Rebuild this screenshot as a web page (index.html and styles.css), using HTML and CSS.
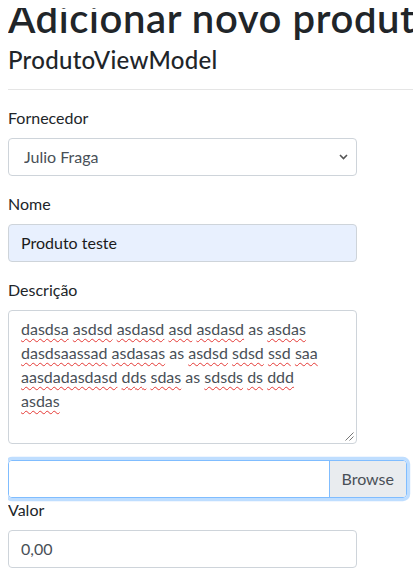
FILE: index.html
```html
<!DOCTYPE html>
<html lang="pt-BR">
<head>
<meta charset="utf-8">
<title>Adicionar novo produto</title>
<link rel="stylesheet" href="styles.css">
</head>
<body>
<main class="page">
  <h1 class="title">Adicionar novo produto</h1>
  <h4 class="subtitle">ProdutoViewModel</h4>
  <hr class="divider">
  <form class="form">
    <div class="group">
      <label class="label" for="forn">Fornecedor</label>
      <select class="control select" id="forn"><option>Julio Fraga</option></select>
    </div>
    <div class="group">
      <label class="label" for="nome">Nome</label>
      <input class="control autofill" id="nome" type="text" value="Produto teste">
    </div>
    <div class="group">
      <label class="label">Descrição</label>
      <div class="control textarea" role="textbox" aria-multiline="true"><span class="sp">dasdsa</span> <span class="sp">asdsd</span> <span class="sp">asdasd</span> <span class="sp">asd</span> <span class="sp">asdasd</span> as <span class="sp">asdas</span><br><span class="sp">dasdsaassad</span> <span class="sp">asdasas</span> as <span class="sp">asdsd</span> <span class="sp">sdsd</span> <span class="sp">ssd</span> <span class="sp">saa</span><br><span class="sp">aasdadasdasd</span> <span class="sp">dds</span> <span class="sp">sdas</span> as <span class="sp">sdsds</span> <span class="sp">ds</span> <span class="sp">ddd</span><br><span class="sp">asdas</span><svg class="grip" width="9" height="9" viewBox="0 0 9 9"><path d="M0.5 8.5 L8.5 0.5 M4.5 8.5 L8.5 4.5" stroke="#777" stroke-width="1" fill="none"/></svg></div>
    </div>
    <div class="file">
      <span class="file-field"></span>
      <span class="file-btn">Browse</span>
    </div>
    <label class="label" for="valor">Valor</label>
    <input class="control" id="valor" type="text" value="0,00">
  </form>
</main>
</body>
</html>
```
FILE: styles.css
```css
body {
  margin: 8px 0 8px 8px;
  font-family: "Lato", "Liberation Sans", sans-serif;
  font-size: 16px;
  line-height: 1.5;
  color: #212529;
  background: #fff;
}
.page {
  width: 405px;
  overflow: hidden;
}
.title {
  margin: -14px 0 4px;
  font-size: 40px;
  font-weight: 600;
  letter-spacing: 0.6px;
  line-height: 1.2;
  white-space: nowrap;
}
.subtitle {
  margin: 0;
  font-size: 24px;
  font-weight: 500;
  letter-spacing: 0.3px;
  line-height: 1.2;
}
.divider {
  margin: 14px 0 16px;
  border: 0;
  border-top: 1px solid rgba(0, 0, 0, 0.1);
}
.form {
  display: flex;
  flex-direction: column;
  padding-bottom: 8px;
}
.group {
  display: flex;
  flex-direction: column;
  margin-bottom: 16px;
}
.label {
  display: block;
  margin-bottom: 8px;
  line-height: 24px;
}
.control {
  box-sizing: border-box;
  display: block;
  width: 349px;
  height: 38px;
  padding: 6px 12px;
  font: inherit;
  line-height: 24px;
  color: #495057;
  background: #fff;
  border: 1px solid #ced4da;
  border-radius: 4px;
  margin: 0;
}
.select {
  -webkit-appearance: none;
  appearance: none;
  padding-left: 15px;
  background: #fff url("data:image/svg+xml,%3Csvg xmlns='http://www.w3.org/2000/svg' width='9' height='6' viewBox='0 0 9 6'%3E%3Cpath d='M1 1 L4.5 4.5 L8 1' stroke='%23555' stroke-width='1.6' fill='none'/%3E%3C/svg%3E") no-repeat right 8px center;
}
.autofill {
  background: #e8f0fe;
  color: #1b1b1b;
}
.textarea {
  position: relative;
  height: 134px;
  white-space: nowrap;
  overflow: hidden;
}
.sp {
  text-decoration: underline wavy #e53935;
  text-decoration-thickness: 1px;
  text-underline-offset: 3px;
}
.grip {
  position: absolute;
  right: 2px;
  bottom: 2px;
}
.file {
  box-sizing: border-box;
  display: flex;
  width: 399px;
  height: 38px;
  border: 1px solid #80bdff;
  border-radius: 4px;
  box-shadow: 0 0 0 3.2px rgba(0, 123, 255, 0.25);
  overflow: hidden;
}
.file-field {
  flex: 1;
  background: #fff;
}
.file-btn {
  padding: 6px 12px;
  line-height: 24px;
  color: #495057;
  background: #e9ecef;
  border-left: 1px solid #80bdff;
}
```
